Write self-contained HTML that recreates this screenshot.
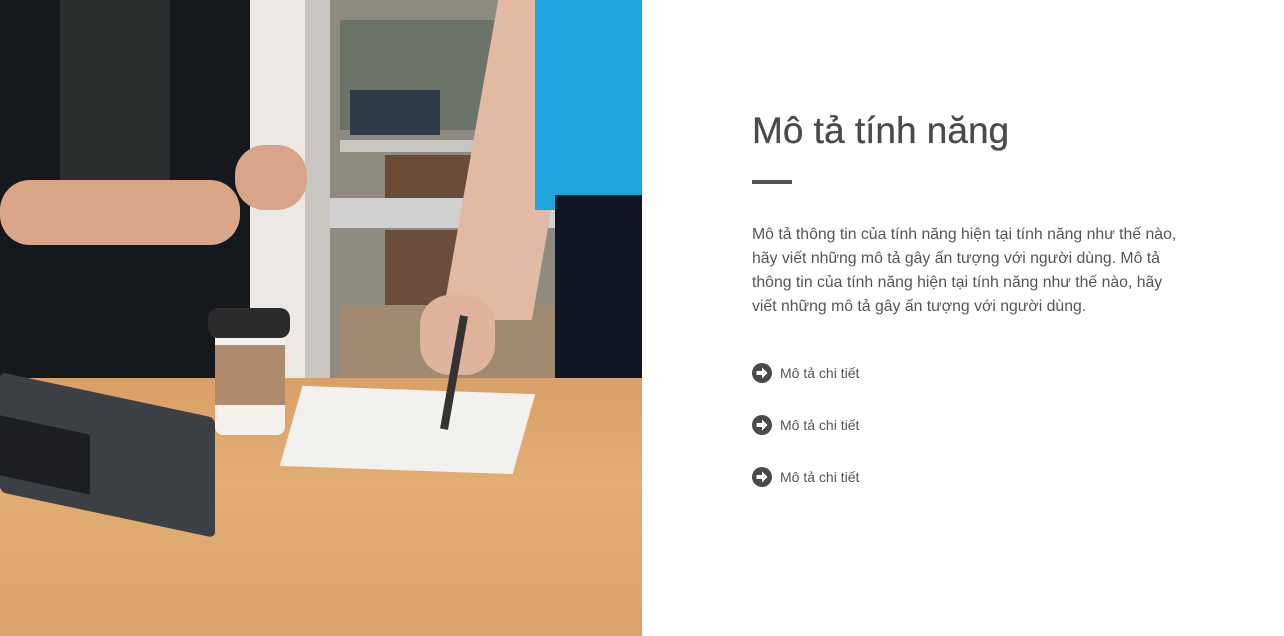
<!DOCTYPE html>
<html><head><meta charset="utf-8"><style>
*{margin:0;padding:0;box-sizing:border-box}
body{width:1284px;height:636px;overflow:hidden;background:#fff;font-family:"Liberation Sans","DejaVu Sans",sans-serif;color:#4a4a4a;position:relative}
.photo{position:absolute;left:0;top:0;width:642px;height:636px;overflow:hidden;background:#d9d6d0}
.photo div{position:absolute}
h1{position:absolute;left:752px;top:110px;font-size:37px;font-weight:normal;color:#4a4a4a;-webkit-text-stroke:0.3px #4a4a4a}
.bar{position:absolute;left:752px;top:180px;width:40px;height:4px;background:#555}
p{position:absolute;left:752px;top:223px;font-size:15.8px;line-height:24px;color:#555;white-space:nowrap}
.li{position:absolute;left:752px;font-size:14px;color:#555;display:flex;align-items:center}
.li svg{margin-right:8px}
</style></head><body>
<div class="photo">
 <div style="left:190px;top:0;width:150px;height:380px;background:#ece9e4"></div>
 <div style="left:305px;top:0;width:40px;height:380px;background:#c9c6c1"></div>
 <div style="left:330px;top:0;width:240px;height:380px;background:#8f8a80"></div>
 <div style="left:340px;top:20px;width:170px;height:110px;background:#6c7468"></div>
 <div style="left:350px;top:90px;width:90px;height:45px;background:#2d3a48"></div>
 <div style="left:340px;top:140px;width:220px;height:12px;background:#c7c5c0"></div>
 <div style="left:385px;top:155px;width:95px;height:45px;background:#6b4a38"></div>
 <div style="left:330px;top:198px;width:240px;height:30px;background:#d0d0d0"></div>
 <div style="left:385px;top:230px;width:95px;height:75px;background:#6a4d3d"></div>
 <div style="left:340px;top:305px;width:230px;height:75px;background:#a08a72"></div>
 <div style="left:0;top:0;width:250px;height:380px;background:#15181c"></div>
 <div style="left:60px;top:0;width:110px;height:180px;background:#2a2d2e"></div>
 <div style="left:0;top:180px;width:240px;height:65px;background:#d9a688;border-radius:30px"></div>
 <div style="left:235px;top:145px;width:72px;height:65px;background:#d8a58a;border-radius:30px"></div>
 <div style="left:470px;top:0;width:90px;height:320px;background:#e2b9a2;transform:skewX(-10deg)"></div>
 <div style="left:535px;top:0;width:107px;height:210px;background:#1ea5dc"></div>
 <div style="left:555px;top:195px;width:87px;height:185px;background:#0f1726"></div>
 <div style="left:0;top:378px;width:642px;height:258px;background:linear-gradient(180deg,#d9a067,#e2ae74 40%,#dba36a)"></div>
 <div style="left:0;top:395px;width:215px;height:120px;background:#3c3f44;transform:skewY(12deg);border-radius:6px"></div>
 <div style="left:0;top:425px;width:90px;height:60px;background:#1d1e22;transform:skewY(12deg)"></div>
 <div style="left:290px;top:390px;width:235px;height:80px;background:#f2f1ee;transform:skewX(-14deg) rotate(2deg)"></div>
 <div style="left:215px;top:320px;width:70px;height:115px;background:#f4f1ec;border-radius:0 0 8px 8px"></div>
 <div style="left:215px;top:345px;width:70px;height:60px;background:#b08a6c"></div>
 <div style="left:208px;top:308px;width:82px;height:30px;background:#2b2b2b;border-radius:10px"></div>
 <div style="left:420px;top:295px;width:75px;height:80px;background:#e0b49c;border-radius:30px"></div>
 <div style="left:450px;top:315px;width:8px;height:115px;background:#333;transform:rotate(10deg)"></div>
</div>
<h1>Mô tả tính năng</h1>
<div class="bar"></div>
<p>Mô tả thông tin của tính năng hiện tại tính năng như thế nào,<br>hãy viết những mô tả gây ấn tượng với người dùng. Mô tả<br>thông tin của tính năng hiện tại tính năng như thế nào, hãy<br>viết những mô tả gây ấn tượng với người dùng.</p>
<div class="li" style="top:363px"><svg width="20" height="20" viewBox="0 0 20 20"><circle cx="10" cy="10" r="10" fill="#4a4a4a"/><path d="M4.5 8h5.5V4.5L15.5 10 10 15.5V12H4.5z" fill="#fff"/></svg>Mô tả chi tiết</div>
<div class="li" style="top:415px"><svg width="20" height="20" viewBox="0 0 20 20"><circle cx="10" cy="10" r="10" fill="#4a4a4a"/><path d="M4.5 8h5.5V4.5L15.5 10 10 15.5V12H4.5z" fill="#fff"/></svg>Mô tả chi tiết</div>
<div class="li" style="top:467px"><svg width="20" height="20" viewBox="0 0 20 20"><circle cx="10" cy="10" r="10" fill="#4a4a4a"/><path d="M4.5 8h5.5V4.5L15.5 10 10 15.5V12H4.5z" fill="#fff"/></svg>Mô tả chi tiết</div>
</body></html>
